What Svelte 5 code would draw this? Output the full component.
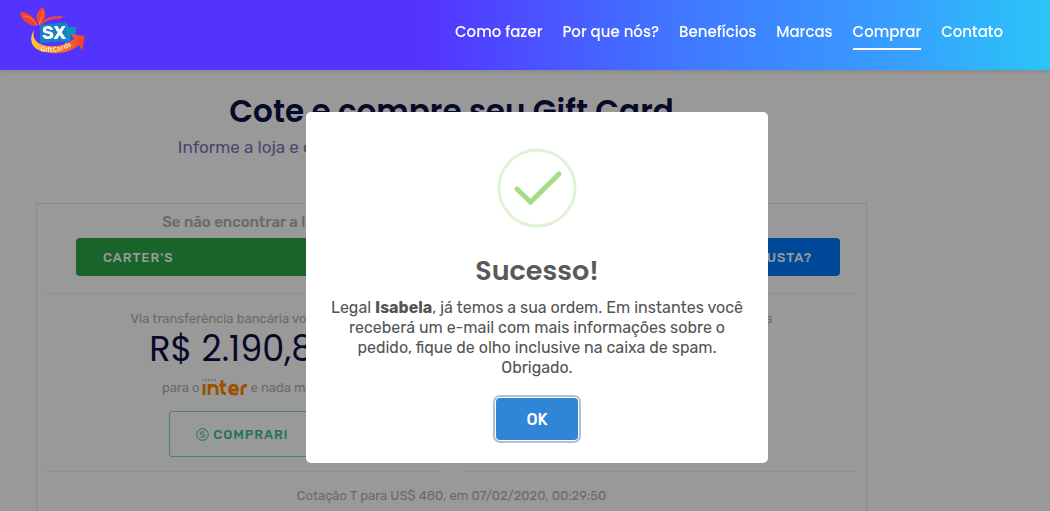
<script>
    const links = [
        { label: 'Como fazer', href: '#como-fazer' },
        { label: 'Por que nós?', href: '#por-que' },
        { label: 'Benefícios', href: '#beneficios' },
        { label: 'Marcas', href: '#marcas' },
        { label: 'Comprar', href: '#comprar' },
        { label: 'Contato', href: '#contato' }
    ];

    const stores = ["CARTER'S", 'GAP', 'OLD NAVY'];

    let active = $state('Comprar');
    let store = $state(stores[0]);
    let customer = $state('Isabela');
    let showModal = $state(true);
</script>

<svelte:head>
    <title>SX GiftCards</title>
</svelte:head>

<div class="page">
    <header class="topbar">
        <a class="logo" href="#inicio" aria-label="SX GiftCards">
            <svg width="70" height="50" viewBox="0 0 70 50">
                <defs>
                    <linearGradient id="swoosh" x1="0" x2="1">
                        <stop offset="0" stop-color="#ffd02e" />
                        <stop offset="0.35" stop-color="#fb8a2c" />
                        <stop offset="1" stop-color="#ee3f2c" />
                    </linearGradient>
                    <path id="swoosh-text" d="M22 44 Q40 48 59 36" />
                </defs>
                <path d="M22 18 L48 15 V20 L58 20 V27 L53 28 V34 L22 36 Z" fill="#1380c8" />
                <path d="M48 15 L51 20 L58 20 V27 L52 29 V34 L48 35 Z" fill="#0b8fbd" />
                <path d="M19 19 C12 19 5 15 2 7 C2 4 5 5 8 6 C14 8 18 12 19 19 Z" fill="#f2402f" />
                <path d="M21 18 C16 10 19 4 25 0 C29 6 28 13 21 18 Z" fill="#f4452f" />
                <path d="M21 19 C27 9 36 9 45 9 L43 12 C36 11 28 13 22 19 Z" fill="#e8473d" />
                <path d="M5 9 C11 9 16 13 19 18 M25 4 C24 9 23 13 21 18" fill="none" stroke="#fb8a2c" stroke-width="1" />
                <path d="M16 23 C10 33 14 43 27 45 C40 48 53 45 61 38 L64 44 L67 29 L53 27 L56 32 C47 39 33 41 25 38 C18 36 14 31 16 23 Z" fill="url(#swoosh)" />
                <text class="logo-sx" x="24" y="32">SX</text>
                <text class="logo-name"><textPath href="#swoosh-text">GiftCards</textPath></text>
            </svg>
        </a>
        <nav>
            {#each links as link (link.label)}
                <a href={link.href} class:active={active === link.label} onclick={() => (active = link.label)}>{link.label}</a>
            {/each}
        </nav>
    </header>

    <main>
        <h1>Cote e compre seu Gift Card</h1>
        <p class="lead">Informe a loja e o valor do seu Gift Card e receba já a cotação na hora!</p>

        <section class="quote">
            <p class="hint">Se não encontrar a loja desejada, escolha a opção outra e informe o nome depois</p>
            <form class="search" onsubmit={(e) => e.preventDefault()}>
                <select aria-label="Loja" bind:value={store}>
                    {#each stores as s}
                        <option>{s}</option>
                    {/each}
                </select>
                <button type="submit">QUANTO CUSTA?</button>
            </form>

            <div class="options">
                <div class="option">
                    <p>Via transferência bancária você paga</p>
                    <strong class="price">R$ 2.190,85</strong>
                    <p class="bank">
                        para o
                        <svg width="45" height="18" viewBox="0 0 45 18" role="img" aria-label="inter">
                            <g fill="none" stroke="#ff8700" stroke-width="2.800">
                                <path d="M2 5V16M7 16V5M7 11C7 5 15 5 15 10V16M20 1V12Q20 14.500 24 14.500M17 6H24M27.500 11H35.500C36 5 27.500 4 27.500 11C28 16 33 15.500 36 14M40 16V10Q40 6.500 45 6.500" />
                            </g>
                            <path d="M0 1H14" stroke="#999" stroke-width="1" stroke-dasharray="2 1" />
                        </svg>
                        e nada mais
                    </p>
                    <button class="buy" type="button">
                        <svg width="13" height="13" viewBox="0 0 13 13" fill="none" stroke="currentColor" aria-hidden="true">
                            <circle cx="6.500" cy="6.500" r="5.800" />
                            <path d="M8.500 4H5.500Q4.300 4 4.300 5.200Q4.300 6.400 5.500 6.400H7.500Q8.700 6.400 8.700 7.700Q8.700 9 7.500 9H4.500" />
                        </svg>
                        COMPRAR!
                    </button>
                </div>
                <div class="option">
                    <p>Pelo cartão de crédito você pagaria a</p>
                </div>
            </div>

            <p class="stamp">Cotação T para US$ 480, em 07/02/2020, 00:29:50</p>
        </section>
    </main>

    {#if showModal}
        <div class="overlay">
            <div class="modal" role="dialog" aria-modal="true" aria-labelledby="modal-title">
                <svg class="check" width="80" height="80" viewBox="0 0 80 80" fill="none" aria-hidden="true">
                    <circle cx="40" cy="40" r="38" stroke="#e1f3d7" stroke-width="3" />
                    <path d="M20 41 L33.500 54 L62 26" stroke="#a5dc86" stroke-width="5" stroke-linecap="round" />
                </svg>
                <h2 id="modal-title">Sucesso!</h2>
                <p>
                    Legal <b>{customer}</b>, já temos a sua ordem. Em instantes você receberá um e-mail com mais
                    informações sobre o pedido, fique de olho inclusive na caixa de spam. Obrigado.
                </p>
                <button type="button" onclick={() => (showModal = false)}>OK</button>
            </div>
        </div>
    {/if}
</div>

<style>
    :global(body) {
        margin: 0;
        overflow: hidden;
    }

    .page {
        height: 100vh;
        overflow: hidden;
        background: #fff;
        font-family: Rubik, Roboto, 'Liberation Sans', sans-serif;
    }

    h1, h2, p {
        margin: 0;
    }

    .topbar {
        position: relative;
        z-index: 3;
        height: 70px;
        box-sizing: border-box;
        padding: 0 47px 0 18px;
        display: flex;
        align-items: center;
        justify-content: space-between;
        background: linear-gradient(90deg, #5433ff 40%, #4078ff 65%, #389bff 84%, #2bc5f7 100%);
        box-shadow: 0 1px 4px rgba(0, 0, 0, 0.15);
    }

    .logo {
        height: 50px;
        margin-bottom: 6px;
    }

    .logo-sx {
        font: 700 18px Rubik, 'Open Sans', sans-serif;
        fill: #fff;
    }

    .logo-name {
        font: 700 7px 'Open Sans', sans-serif;
        fill: #ffe9a8;
    }

    nav {
        display: flex;
        gap: 20px;
        padding-bottom: 6px;
    }

    nav a {
        color: #fff;
        font: 500 15px/24px Poppins, Inter, sans-serif;
        text-decoration: none;
        padding: 6px 0 4px;
        border-bottom: 2px solid transparent;
    }

    nav a.active {
        border-color: #fff;
    }

    main {
        width: 86%;
        box-sizing: border-box;
        padding: 21px 36px 0;
        text-align: center;
    }

    h1 {
        color: #0e0e45;
        font: 600 31px/40px Poppins, Inter, sans-serif;
        white-space: nowrap;
    }

    .lead {
        color: #7777b8;
        font-size: 17px;
        line-height: 24px;
        padding: 4px 0 44px;
        white-space: nowrap;
    }

    .quote {
        border: 1px solid #e8e8e8;
        min-height: 400px;
        padding: 8px 10px;
        color: #b0b0b0;
        font-size: 13px;
    }

    .hint {
        color: #b0b0b0;
        font-size: 15px;
        font-weight: 500;
        line-height: 20px;
        white-space: nowrap;
    }

    .search {
        display: flex;
        margin: 6px 0 0;
        padding: 0 16px 17px 29px;
        border-bottom: 1px solid #eee;
    }

    .search select,
    .search button {
        height: 38px;
        border: 0;
        color: #fff;
        font: 500 13px Rubik, Roboto, sans-serif;
        letter-spacing: 1px;
    }

    .search select {
        flex: 1;
        appearance: none;
        padding: 0 27px;
        background: #28a745;
        border-radius: 4px 0 0 4px;
    }

    .search button {
        padding: 0 28px;
        background: #007bff;
        border-radius: 0 4px 4px 0;
    }

    .options {
        display: grid;
        grid-template-columns: 1fr 1fr;
        gap: 28px;
    }

    .option {
        display: flex;
        flex-direction: column;
        align-items: center;
        padding: 15px 0 14px;
        border-bottom: 1px solid #eee;
        line-height: 20px;
    }

    .price {
        color: #0e0e45;
        font: 400 35px/40px Poppins, Inter, sans-serif;
    }

    .bank {
        display: flex;
        align-items: center;
        gap: 3px;
        padding: 9px 0 13px;
    }

    .buy {
        display: flex;
        align-items: center;
        gap: 4px;
        height: 46px;
        padding: 0 26px;
        color: #36c486;
        background: none;
        border: 1px solid #7fd5b1;
        border-radius: 3px;
        font: 500 13px Rubik, Roboto, sans-serif;
        letter-spacing: 1px;
    }

    .stamp {
        line-height: 20px;
        padding-top: 14px;
    }

    .overlay {
        position: fixed;
        inset: 0;
        z-index: 2;
        display: flex;
        align-items: flex-start;
        justify-content: center;
        padding: 112px 0 0 24px;
        background: rgba(0, 0, 0, 0.4);
    }

    .modal {
        width: 45%;
        min-width: 320px;
        box-sizing: border-box;
        padding: 36px 20px 23px;
        display: flex;
        flex-direction: column;
        align-items: center;
        background: #fff;
        border-radius: 5px;
        text-align: center;
    }

    .modal h2 {
        color: #595959;
        font: 600 27px/36px Poppins, Inter, sans-serif;
        padding: 25px 0 9px;
    }

    .modal p {
        color: #545454;
        font-size: 16px;
        line-height: 20px;
    }

    .modal button {
        height: 42px;
        margin-top: 20px;
        padding: 0 30px;
        color: #fff;
        background: #3085d6;
        border: 0;
        border-radius: 4px;
        box-shadow: 0 0 0 1px #fff, 0 0 0 3px rgba(50, 100, 150, 0.4);
        font: 500 16px Rubik, Roboto, sans-serif;
    }
</style>
